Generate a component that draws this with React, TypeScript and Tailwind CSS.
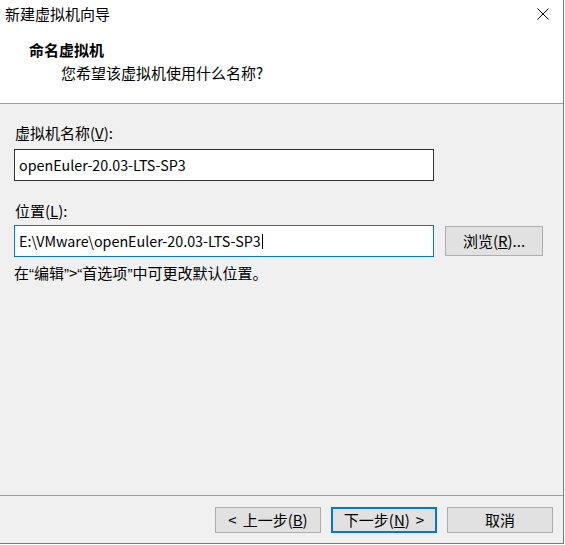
import React from 'react';

const font = { fontFamily: '"Noto Sans CJK SC", "Noto Sans", sans-serif' };

const Btn: React.FC<{ children: React.ReactNode; primary?: boolean }> = ({ children, primary }) => (
  <div
    className={`w-[106px] h-[26px] flex items-center justify-center bg-[#e1e1e1] text-[15px] leading-[20px] text-black ${
      primary ? 'border-2 border-[#0078d7]' : 'border border-[#adadad]'
    }`}
  >
    {children}
  </div>
);

// narrow quote marks, as in the dialog's UI font
const Q: React.FC<{ c: string }> = ({ c }) => (
  <span className="font-['Liberation_Sans',sans-serif]">{c}</span>
);

export default function App() {
  return (
    <div className="w-[565px] h-[545px] bg-white" style={font}>
      <div className="w-[564px] h-[544px] flex flex-col border-r border-b border-[#7a7a7a] text-black">
        {/* Title bar */}
        <div className="h-[27px] flex items-center justify-between pl-[5px] pr-[14px] bg-white">
          <span className="text-[15px] leading-[20px]">新建虚拟机向导</span>
          <svg width="12" height="12" viewBox="0 0 12 12" className="mt-[1px]">
            <path d="M0.5 0.5 L11.5 11.5 M11.5 0.5 L0.5 11.5" stroke="#000" strokeWidth="1" />
          </svg>
        </div>

        {/* Header */}
        <div className="h-[77px] bg-white border-b border-[#a0a0a0] pl-[29px] pt-[13px]">
          <div className="text-[15px] leading-[20px] font-bold">命名虚拟机</div>
          <div className="text-[15px] leading-[20px] mt-[3px] pl-[32px]">您希望该虚拟机使用什么名称?</div>
        </div>

        {/* Body */}
        <div className="flex-1 bg-[#f0f0f0] pl-[14px] pt-[19px]">
          <div className="text-[15px] leading-[20px] pl-[1px]">
            虚拟机名称(<span className="underline">V</span>):
          </div>
          <div className="mt-[6px] w-[420px] h-[32px] bg-white border border-[#333333] flex items-center pl-[4px] text-[14.3px]">
            openEuler-20.03-LTS-SP3
          </div>

          <div className="mt-[20px] text-[15px] leading-[20px] pl-[1px]">
            位置(<span className="underline">L</span>):
          </div>
          <div className="mt-[4px] flex items-center gap-[11px]">
            <div className="w-[420px] h-[32px] bg-white border border-[#0078d7] flex items-center pl-[4px] text-[14.3px]">
              <span>E:\VMware\openEuler-20.03-LTS-SP3</span>
              <span className="w-px h-[15px] bg-black ml-[1px]" />
            </div>
            <div className="w-[98px] h-[30px] bg-[#e1e1e1] border border-[#adadad] flex items-center justify-center text-[15px]">
              浏览(<span className="underline">R</span>)...
            </div>
          </div>
          <div className="mt-[6px] text-[15px] leading-[20px]">
            在<Q c="“" />编辑<Q c="”" />&gt;<Q c="“" />首选项<Q c="”" />中可更改默认位置。
          </div>
        </div>

        {/* Footer */}
        <div className="h-[48px] bg-[#f0f0f0] border-t border-[#a0a0a0] flex items-start justify-end gap-[10px] pt-[11px] pr-[10px]">
          <Btn>
            &lt;<span className="inline-block w-[6px]" />上一步(<span className="underline">B</span>)
          </Btn>
          <Btn primary>
            下一步(<span className="underline">N</span>)<span className="inline-block w-[6px]" />&gt;
          </Btn>
          <Btn>取消</Btn>
        </div>
      </div>
    </div>
  );
}
